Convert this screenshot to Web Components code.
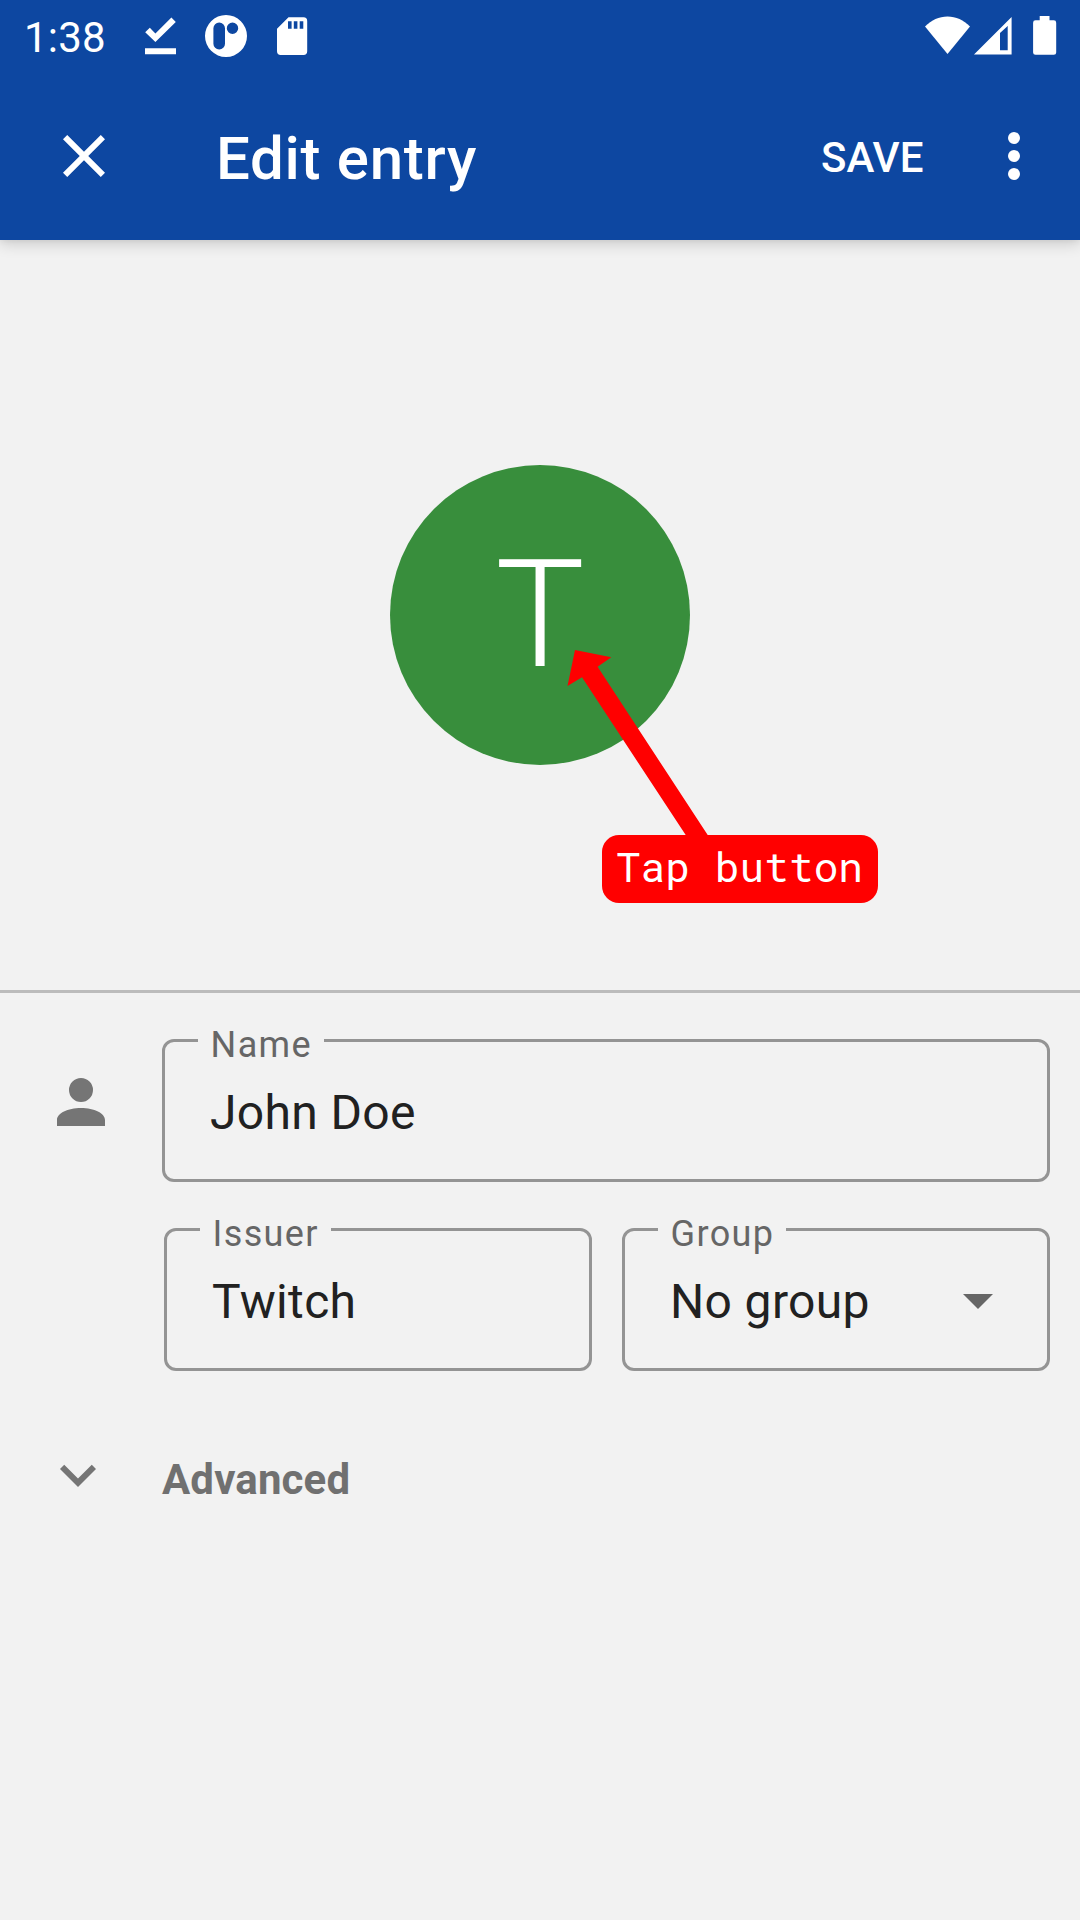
<!DOCTYPE html>
<html lang="en">
<head>
<meta charset="utf-8">
<title>Edit entry</title>
<style>
html,body{margin:0;background:#f2f2f2}
body{width:1080px;height:1920px;overflow:hidden;font-family:Roboto,"Liberation Sans",sans-serif}
</style>
</head>
<body>
<edit-screen></edit-screen>
<script>
function define(name, html){
  const t=document.createElement('template');
  t.innerHTML=html;
  customElements.define(name,class extends HTMLElement{
    constructor(){
      super();
      this.attachShadow({mode:'open'}).append(t.content.cloneNode(true));
    }
  });
}

define('status-bar',`<style>
:host{display:flex;justify-content:space-between;height:72px;background:#0d47a1;color:#fff}
svg{display:block;fill:#fff}
.l{display:flex;padding-left:24px}
.time{width:108px;font-size:42px;line-height:76px;letter-spacing:.2px}
</style>
<div class="l"><span class="time">1:38</span>
<svg width="200" height="72" viewBox="132 0 200 72">
<path d="M145 48.3h31v6h-31zM145.2 32.2l4.6-4.4 5.6 5.6 16-15.9 4.400 4.400-20.400 20.200z"/>
<path fill-rule="evenodd" d="M226 15a21 21 0 1 0 0 42a21 21 0 1 0 0-42zM219.200 22.500a5.800 5.800 0 0 1 5.800 5.800v15.400a5.800 5.800 0 0 1-11.600 0v-15.400a5.800 5.800 0 0 1 5.800-5.800zM232.500 22.600a5.700 5.700 0 1 1 0 11.400a5.700 5.700 0 1 1 0-11.400z"/>
<path fill-rule="evenodd" d="M288.500 17.200h15a3.700 3.700 0 0 1 3.700 3.700v30.400a3.700 3.700 0 0 1-3.700 3.700h-22.800a3.700 3.700 0 0 1-3.700-3.700v-22.600zM288 21.300v7.500h3.600v-7.500zM293.800 21.300v7.500h3.600v-7.500zM299.700 21.300v7.500h3.600v-7.500z"/>
</svg></div>
<svg width="160" height="72" viewBox="920 0 160 72">
<path d="M947.500 54L925 26.400C931.500 20 939 16.500 947.500 16.500S963.500 20 970 26.400z"/>
<path fill-rule="evenodd" d="M974 54.500L1011.600 17v37.500zM1000 33v17.300h7.700V26z"/>
<path d="M1039.700 16h9.800v4.300h4.300a2.400 2.400 0 0 1 2.400 2.400v29.700a2.400 2.400 0 0 1-2.400 2.400h-18.300a2.400 2.400 0 0 1-2.400-2.400V22.700a2.400 2.400 0 0 1 2.400-2.400h4.200z"/>
</svg>`);

define('app-bar',`<style>
:host{display:flex;height:168px;background:#0d47a1;color:#fff;position:relative;box-shadow:0 4px 14px rgba(0,0,0,.16),0 2px 5px rgba(0,0,0,.04);clip-path:inset(0 0 -30px 0)}
svg{display:block;fill:#fff;flex:none}
.close{margin:48px 96px 0 48px}
.title{flex:1;font-size:60px;font-weight:500;line-height:173px;letter-spacing:.7px;white-space:nowrap}
.save{font-size:42px;font-weight:500;line-height:171px;width:157px}
.more{margin:48px 30px 0 0}
</style>
<svg class="close" width="72" height="72" viewBox="0 0 24 24"><path d="M19 6.410L17.590 5 12 10.590 6.410 5 5 6.410 10.590 12 5 17.590 6.410 19 12 13.410 17.590 19 19 17.590 13.410 12z"/></svg>
<span class="title"><slot></slot></span>
<span class="save"><slot name="action"></slot></span>
<svg class="more" width="72" height="72" viewBox="0 0 24 24"><circle cx="12" cy="6" r="2"/><circle cx="12" cy="12" r="2"/><circle cx="12" cy="18" r="2"/></svg>`);

define('entry-avatar',`<style>
:host{display:block;width:300px;height:300px;border-radius:50%;background:#388e3c;color:#fff;text-align:center;font-size:150px;font-weight:300;line-height:300px}
</style><slot></slot>`);

define('tap-hint',`<style>
:host{position:absolute;left:560px;top:400px;width:330px;height:270px}
svg{display:block;fill:red;height:195px}
.tag{margin-left:41.500px;width:276px;height:68px;border-radius:17px;background:red;color:#fff;font:41.200px/63px "Roboto Mono","DejaVu Sans Mono","Liberation Mono",monospace;text-align:center;white-space:nowrap}
</style>
<svg width="330" height="195" viewBox="560 640 330 195"><path d="M575 650L611.300 657.300 597.600 666.700 707.700 835H685.700L582 677.300 567.500 686z"/></svg>
<div class="tag"><slot></slot></div>`);

define('outlined-field',`<style>
:host{display:flex;align-items:center;justify-content:space-between;position:relative;box-sizing:border-box;height:143px;border:3px solid #949494;border-radius:12px;padding:4px 33px 0 45px;color:#212121}
.label{position:absolute;left:33px;top:-20px;width:var(--notch);box-sizing:border-box;padding-left:12.600px;background:#f2f2f2;color:#666;font-size:36px;line-height:46px;letter-spacing:1.350px;white-space:nowrap}
.value{font-size:48px;line-height:60px;letter-spacing:.350px;white-space:nowrap}
</style>
<span class="label"><slot name="label"></slot></span>
<span class="value"><slot></slot></span><slot name="end"></slot>`);

define('drop-arrow',`<style>:host{display:block;margin-top:-2px}svg{display:block;fill:#666}</style>
<svg width="72" height="72" viewBox="0 0 24 24"><path d="M7 9.670l5 5 5-5z"/></svg>`);

define('person-icon',`<style>:host{display:block;width:72px;height:72px;margin:27px 0 0 45px}svg{display:block;fill:#757575}</style>
<svg width="72" height="72" viewBox="0 0 24 24"><path d="M12 12a4 4 0 1 0 0-8 4 4 0 0 0 0 8zM12 14c-4.420 0-8 1.790-8 4v2h16v-2c0-2.210-3.580-4-8-4z"/></svg>`);

define('advanced-row',`<style>
:host{display:flex;color:#707070;font-size:42px;font-weight:700;line-height:82px;letter-spacing:.150px}
svg{display:block;fill:#757575;margin:0 48px 0 42px}
</style>
<svg width="72" height="72" viewBox="0 0 24 24"><path d="M16.590 8.590L12 13.170 7.410 8.590 6 10l6 6 6-6z"/></svg><slot></slot>`);

define('edit-screen',`<style>
:host{display:flex;flex-direction:column;width:1080px;height:1920px;background:#f2f2f2}
.stage{display:flex;align-items:center;justify-content:center;position:relative;height:750px;border-bottom:3px solid #bcbcbc}
app-bar{z-index:1}
form{display:flex;flex-direction:column;padding:46px 30px 0 0;gap:46px}
.name{display:grid;grid-template-columns:162px 1fr}
.pair{display:grid;grid-template-columns:1fr 1fr;gap:30px;padding-left:164px}
advanced-row{padding-top:22px}
</style>
<status-bar></status-bar>
<app-bar>Edit entry<span slot="action">SAVE</span></app-bar>
<div class="stage"><entry-avatar>T</entry-avatar><tap-hint>Tap button</tap-hint></div>
<form>
<div class="name"><person-icon></person-icon><outlined-field style="--notch:126px"><span slot="label">Name</span>John Doe</outlined-field></div>
<div class="pair">
<outlined-field style="--notch:131px"><span slot="label">Issuer</span>Twitch</outlined-field>
<outlined-field style="--notch:128px"><span slot="label">Group</span>No group<drop-arrow slot="end"></drop-arrow></outlined-field>
</div>
<advanced-row>Advanced</advanced-row>
</form>`);
</script>
</body>
</html>
